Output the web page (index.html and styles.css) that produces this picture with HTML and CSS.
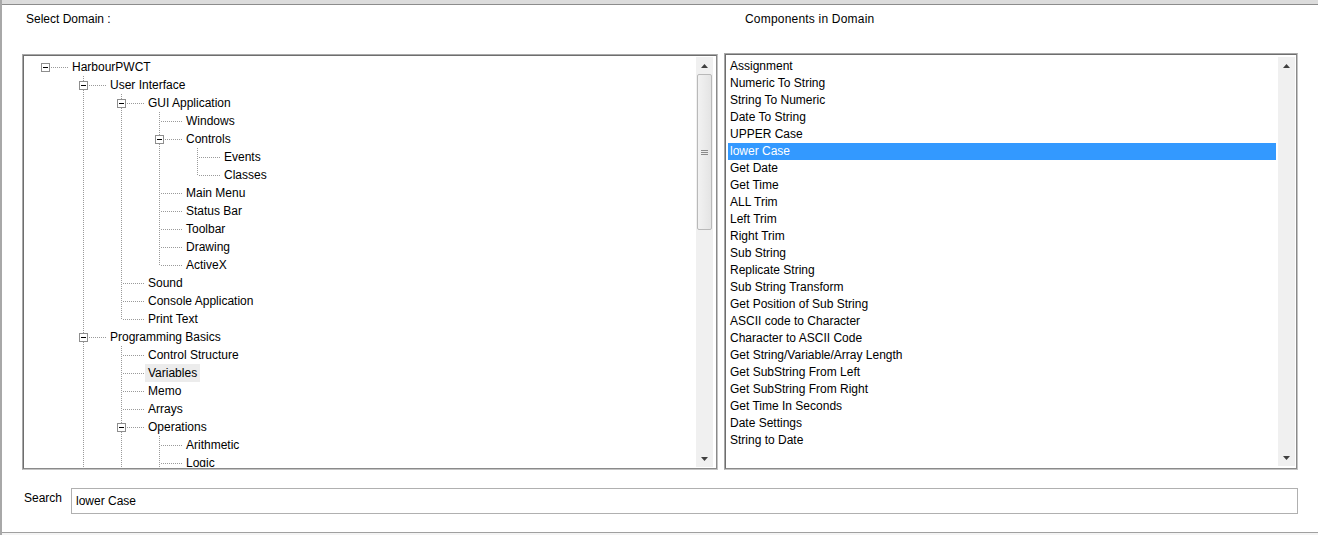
FILE: index.html
```html
<!DOCTYPE html>
<html>
<head>
<meta charset="utf-8">
<title>Select Domain</title>
<link rel="stylesheet" href="styles.css">
</head>
<body>
<div class="window">
  <div class="topbar"></div>
  <div class="content">
    <div class="columns">
      <div class="col col-left">
        <div class="caption cap-left">Select Domain :</div>
        <div class="frame frame-left">
          <div class="frame-inner">
            <div class="tree">
              <div class="row"><span class="conn root"><span class="box"></span></span><span class="label">HarbourPWCT</span></div>
              <div class="row"><span class="cell"></span><span class="conn tee"><span class="box"></span></span><span class="label">User Interface</span></div>
              <div class="row"><span class="cell"></span><span class="cell vert"></span><span class="conn tee"><span class="box"></span></span><span class="label">GUI Application</span></div>
              <div class="row"><span class="cell"></span><span class="cell vert"></span><span class="cell vert"></span><span class="conn tee"></span><span class="label">Windows</span></div>
              <div class="row"><span class="cell"></span><span class="cell vert"></span><span class="cell vert"></span><span class="conn tee"><span class="box"></span></span><span class="label">Controls</span></div>
              <div class="row"><span class="cell"></span><span class="cell vert"></span><span class="cell vert"></span><span class="cell vert"></span><span class="conn tee"></span><span class="label">Events</span></div>
              <div class="row"><span class="cell"></span><span class="cell vert"></span><span class="cell vert"></span><span class="cell vert"></span><span class="conn elbow"></span><span class="label">Classes</span></div>
              <div class="row"><span class="cell"></span><span class="cell vert"></span><span class="cell vert"></span><span class="conn tee"></span><span class="label">Main Menu</span></div>
              <div class="row"><span class="cell"></span><span class="cell vert"></span><span class="cell vert"></span><span class="conn tee"></span><span class="label">Status Bar</span></div>
              <div class="row"><span class="cell"></span><span class="cell vert"></span><span class="cell vert"></span><span class="conn tee"></span><span class="label">Toolbar</span></div>
              <div class="row"><span class="cell"></span><span class="cell vert"></span><span class="cell vert"></span><span class="conn tee"></span><span class="label">Drawing</span></div>
              <div class="row"><span class="cell"></span><span class="cell vert"></span><span class="cell vert"></span><span class="conn elbow"></span><span class="label">ActiveX</span></div>
              <div class="row"><span class="cell"></span><span class="cell vert"></span><span class="conn tee"></span><span class="label">Sound</span></div>
              <div class="row"><span class="cell"></span><span class="cell vert"></span><span class="conn tee"></span><span class="label">Console Application</span></div>
              <div class="row"><span class="cell"></span><span class="cell vert"></span><span class="conn elbow"></span><span class="label">Print Text</span></div>
              <div class="row"><span class="cell"></span><span class="conn tee"><span class="box"></span></span><span class="label">Programming Basics</span></div>
              <div class="row"><span class="cell"></span><span class="cell vert"></span><span class="conn tee"></span><span class="label">Control Structure</span></div>
              <div class="row"><span class="cell"></span><span class="cell vert"></span><span class="conn tee"></span><span class="label hover">Variables</span></div>
              <div class="row"><span class="cell"></span><span class="cell vert"></span><span class="conn tee"></span><span class="label">Memo</span></div>
              <div class="row"><span class="cell"></span><span class="cell vert"></span><span class="conn tee"></span><span class="label">Arrays</span></div>
              <div class="row"><span class="cell"></span><span class="cell vert"></span><span class="conn tee"><span class="box"></span></span><span class="label">Operations</span></div>
              <div class="row"><span class="cell"></span><span class="cell vert"></span><span class="cell vert"></span><span class="conn tee"></span><span class="label">Arithmetic</span></div>
              <div class="row"><span class="cell"></span><span class="cell vert"></span><span class="cell vert"></span><span class="conn tee"></span><span class="label">Logic</span></div>
            </div>
            <div class="scrollbar">
              <div class="sb-btn"><svg width="7" height="4" viewBox="0 0 7 4"><path d="M0 4 L3.5 0 L7 4 Z" fill="#404040"/></svg></div>
              <div class="sb-track">
                <div class="thumb"><span class="grip"></span><span class="grip"></span><span class="grip"></span></div>
              </div>
              <div class="sb-btn"><svg width="7" height="4" viewBox="0 0 7 4"><path d="M0 0 L7 0 L3.5 4 Z" fill="#404040"/></svg></div>
            </div>
          </div>
        </div>
      </div>
      <div class="col col-right">
        <div class="caption cap-right">Components in Domain</div>
        <div class="frame frame-right">
          <div class="frame-inner">
            <ul class="list">
              <li>Assignment</li>
              <li>Numeric To String</li>
              <li>String To Numeric</li>
              <li>Date To String</li>
              <li>UPPER Case</li>
              <li class="selected">lower Case</li>
              <li>Get Date</li>
              <li>Get Time</li>
              <li>ALL Trim</li>
              <li>Left Trim</li>
              <li>Right Trim</li>
              <li>Sub String</li>
              <li>Replicate String</li>
              <li>Sub String Transform</li>
              <li>Get Position of Sub String</li>
              <li>ASCII code to Character</li>
              <li>Character to ASCII Code</li>
              <li>Get String/Variable/Array Length</li>
              <li>Get SubString From Left</li>
              <li>Get SubString From Right</li>
              <li>Get Time In Seconds</li>
              <li>Date Settings</li>
              <li>String to Date</li>
            </ul>
            <div class="scrollbar">
              <div class="sb-btn"><svg width="7" height="4" viewBox="0 0 7 4"><path d="M0 4 L3.5 0 L7 4 Z" fill="#404040"/></svg></div>
              <div class="sb-track"></div>
              <div class="sb-btn"><svg width="7" height="4" viewBox="0 0 7 4"><path d="M0 0 L7 0 L3.5 4 Z" fill="#404040"/></svg></div>
            </div>
          </div>
        </div>
      </div>
    </div>
    <div class="search-row">
      <label class="search-label" for="search">Search</label>
      <input id="search" class="search-input" type="text" value="lower Case">
    </div>
  </div>
  <div class="bottom"></div>
</div>
</body>
</html>
```
FILE: styles.css
```css
* { box-sizing: border-box; }
html, body { margin: 0; padding: 0; background: #ffffff; }
body {
  font-family: "Liberation Sans", Arial, sans-serif;
  font-size: 12px;
  color: #000;
  width: 1318px;
  height: 535px;
  overflow: hidden;
}
.window {
  width: 1318px;
  height: 535px;
  border-left: 2px solid #a8a8a8;
  display: flex;
  flex-direction: column;
  background: #fff;
}
.topbar {
  height: 5px;
  background: #dcdcdc;
  border-bottom: 1px solid #8c8c8c;
  flex: none;
}
.content {
  flex: none;
  height: 527px;
  padding: 0 0 0 20px;
  display: flex;
  flex-direction: column;
}
.columns {
  display: grid;
  grid-template-columns: 696px 574px;
  column-gap: 6px;
}
.col { display: flex; flex-direction: column; }
.caption {
  height: 49px;
  padding-top: 7px;
  line-height: 14px;
}
.cap-left { padding-left: 4px; }
.cap-right { padding-left: 21px; letter-spacing: 0.2px; }
.frame {
  border: 1px solid;
  border-color: #a8a8a8 #c4c4c4 #c4c4c4 #a8a8a8;
  background: #fff;
}
.frame-inner {
  border: 1px solid;
  border-color: #6e6e6e #8a8a8a #8a8a8a #6e6e6e;
  display: flex;
  height: 100%;
  padding: 1px 3px 1px 1px;
  background: #fff;
}
.frame-left { height: 416px; }
.frame-right { height: 417px; margin-top: -1px; }
.frame-right .frame-inner { padding: 2px 1px 2px 1px; }

/* tree */
.tree {
  flex: 1;
  overflow: hidden;
  padding-left: 1px;
  padding-top: 1px;
}
.row {
  display: flex;
  height: 18px;
  align-items: stretch;
}
.cell {
  position: relative;
  width: 38px;
  flex: none;
}
.conn {
  position: relative;
  width: 43px;
  flex: none;
}
.vert::before, .conn.tee::before, .conn.elbow::before {
  content: "";
  position: absolute;
  left: 19px;
  top: 0;
  width: 1px;
  height: 18px;
  background: repeating-linear-gradient(to bottom, #9a9a9a 0 1px, transparent 1px 2px);
}
.conn.elbow::before { height: 10px; }
.conn::after {
  content: "";
  position: absolute;
  left: 20px;
  top: 9px;
  width: 22px;
  height: 1px;
  background: repeating-linear-gradient(to right, transparent 0 1px, #9a9a9a 1px 2px);
}
.box {
  position: absolute;
  left: 15px;
  top: 5px;
  width: 9px;
  height: 9px;
  border: 1px solid #8e8e8e;
  background: #fff;
  z-index: 1;
}
.box::after {
  content: "";
  position: absolute;
  left: 1px;
  top: 3px;
  width: 5px;
  height: 1px;
  background: #000;
}
.label {
  line-height: 18px;
  padding: 0 3px;
  white-space: nowrap;
}
.label.hover { background: #ececec; }

/* scrollbar */
.scrollbar {
  width: 17px;
  flex: none;
  display: flex;
  flex-direction: column;
  background: #f0f0f0;
}
.sb-btn {
  height: 17px;
  flex: none;
  display: flex;
  align-items: center;
  justify-content: center;
}
.sb-track { flex: 1; padding: 0 1px; }
.thumb {
  height: 156px;
  border: 1px solid #b9b9b9;
  border-radius: 2px;
  background: linear-gradient(to right, #f2f2f2, #e4e4e4);
  display: flex;
  flex-direction: column;
  align-items: center;
  justify-content: center;
  gap: 1px;
}
.grip {
  width: 7px;
  height: 1px;
  background: #8a8a8a;
}

/* list */
.list {
  flex: 1;
  list-style: none;
  margin: 0;
  padding: 1px 2px 0 1px;
  overflow: hidden;
}
.list li {
  height: 17px;
  line-height: 17px;
  padding-left: 2px;
  white-space: nowrap;
}
.list li.selected {
  background: #3399ff;
  color: #fff;
}

/* search */
.search-row {
  display: flex;
  margin-top: 18px;
  height: 26px;
}
.search-label {
  width: 49px;
  padding-left: 2px;
  padding-top: 3px;
  line-height: 14px;
  flex: none;
}
.search-input {
  width: 1227px;
  height: 26px;
  border: 1px solid #b0b0b0;
  padding: 0 0 0 4px;
  margin: 0;
  font-family: "Liberation Sans", Arial, sans-serif;
  font-size: 12px;
  color: #000;
  outline: none;
  background: #fff;
}
.bottom {
  flex: none;
  height: 3px;
  border-top: 1px solid #a0a0a0;
  background: #f4f4f4;
}
```
